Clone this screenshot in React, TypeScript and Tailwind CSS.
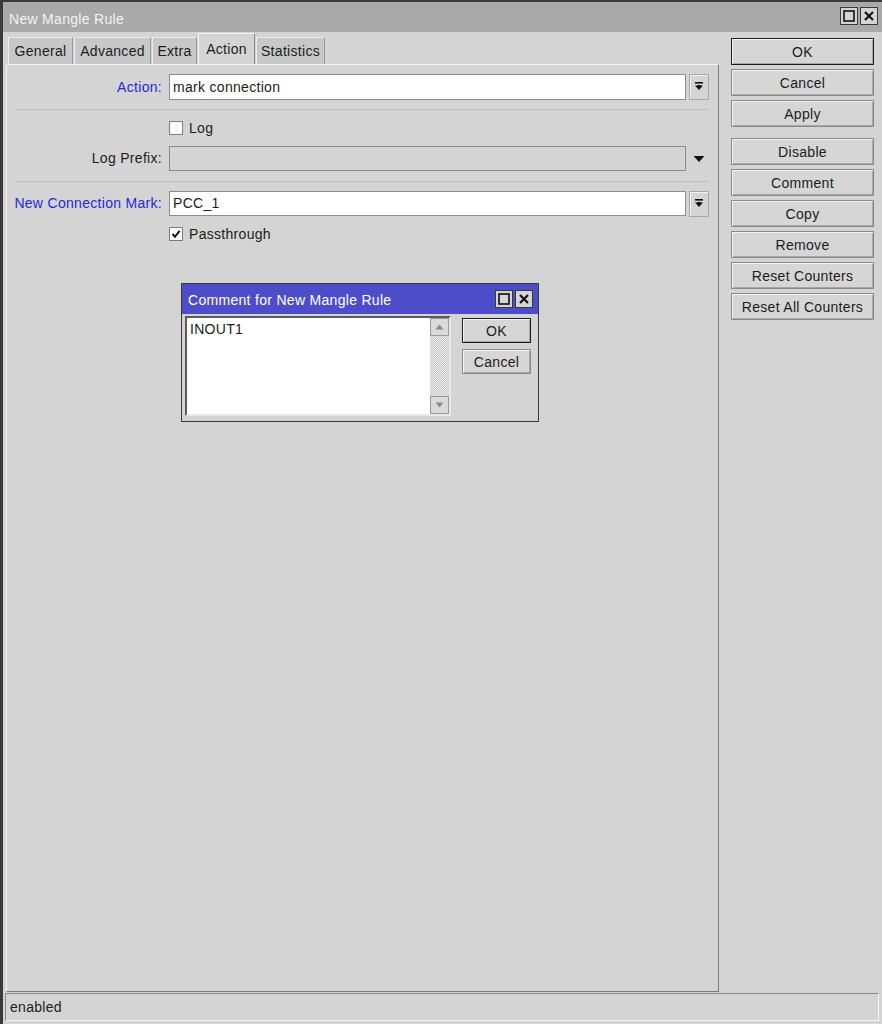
import React from "react";

// ---------------------------------------------------------
// Small pieces
// ---------------------------------------------------------
function WinButtons() {
  return (
    <div className="flex gap-[2px]">
      <div className="flex h-[18px] w-[18px] items-center justify-center border border-[#3a3a3a] bg-[#d4d4d4]">
        <svg width="12" height="12" viewBox="0 0 12 12">
          <rect x="1" y="1" width="10" height="10" fill="none" stroke="#111" strokeWidth="1.6" />
        </svg>
      </div>
      <div className="flex h-[18px] w-[18px] items-center justify-center border border-[#3a3a3a] bg-[#d4d4d4]">
        <svg width="12" height="12" viewBox="0 0 12 12">
          <path d="M2 2 L10 10 M10 2 L2 10" stroke="#111" strokeWidth="2.2" />
        </svg>
      </div>
    </div>
  );
}

function SideButton({ label, isDefault }: { label: string; isDefault?: boolean }) {
  return (
    <button
      className={
        isDefault
          ? "h-[27px] w-full border border-[#1e1e1e] bg-[#d6d6d6] pt-[2px] text-[14px] text-[#1c1c1c] shadow-[inset_1px_1px_0_#f4f4f4,inset_-1px_-1px_0_#a6a6a6]"
          : "h-[27px] w-full border border-[#8a8a8a] bg-[#d6d6d6] pt-[2px] text-[14px] text-[#1c1c1c] shadow-[inset_1px_1px_0_#f4f4f4,inset_-1px_-1px_0_#a6a6a6]"
      }
    >
      {label}
    </button>
  );
}

function DropButton() {
  return (
    <div className="ml-[3px] flex h-[26px] w-[20px] items-center justify-center border border-[#a8a8a8] bg-[#d4d4d4] shadow-[inset_1px_1px_0_#f0f0f0]">
      <svg width="10" height="12" viewBox="0 0 10 12">
        <rect x="1" y="1" width="8" height="1.6" fill="#111" />
        <path d="M1 4.5 H9 L5 9 Z" fill="#111" />
        <rect x="3.5" y="4" width="3" height="3" fill="#111" />
      </svg>
    </div>
  );
}

function Checkbox({ checked }: { checked?: boolean }) {
  return (
    <div className="flex h-[14px] w-[14px] items-center justify-center border border-[#7c7c7c] bg-white">
      {checked && (
        <svg width="10" height="10" viewBox="0 0 10 10">
          <path d="M1.5 5 L4 7.8 L8.6 1.8" fill="none" stroke="#111" strokeWidth="2" />
        </svg>
      )}
    </div>
  );
}

const tabs = [
  { name: "General", w: "w-[65px]" },
  { name: "Advanced", w: "w-[77px]" },
  { name: "Extra", w: "w-[45px]" },
  { name: "Action", w: "w-[57px]", active: true },
  { name: "Statistics", w: "w-[69px]" },
];

// ---------------------------------------------------------
// Page
// ---------------------------------------------------------
export default function App() {
  return (
    <div className="relative flex h-[1024px] w-[882px] flex-col border-l-[3px] border-t-2 border-[#3a3a3a] bg-[#d4d4d4] font-[family-name:'Liberation_Sans',Arial,sans-serif] text-[14px] tracking-[0.3px] text-[#1c1c1c]">
      {/* Title bar */}
      <div className="flex h-[30px] items-center justify-between bg-[#a9a9a9] pl-[6px] pr-[4px]">
        <span className="pt-[5px] text-[14px] text-[#f4f4f4]">New Mangle Rule</span>
        <div className="-mt-[2px]">
          <WinButtons />
        </div>
      </div>

      {/* Main */}
      <div className="flex flex-1">
        {/* Tabs + panel */}
        <div className="ml-[3px] flex w-[713px] flex-col">
          <div className="flex h-[32px] items-end gap-px pl-[2px]">
            {tabs.map((t) =>
              t.active ? (
                <div
                  key={t.name}
                  className={`${t.w} -mb-px flex h-[32px] items-center justify-center border-l border-r border-t border-l-[#f4f4f4] border-r-[#8c8c8c] border-t-[#f4f4f4] bg-[#d4d4d4] pb-[1px]`}
                >
                  {t.name}
                </div>
              ) : (
                <div
                  key={t.name}
                  className={`${t.w} flex h-[27px] items-center justify-center border-l border-r border-t border-l-[#ececec] border-r-[#9a9a9a] border-t-[#ececec] bg-[#c8c8c8] pt-[1px]`}
                >
                  {t.name}
                </div>
              )
            )}
          </div>

          <div className="flex-1 border border-b-[#7c7c7c] border-l-[#f6f6f6] border-r-[#7c7c7c] border-t-[#f6f6f6] bg-[#d4d4d4]">
            {/* Action */}
            <div className="mt-[9px] flex h-[26px] items-center">
              <span className="w-[155px] text-right text-[#2626e0]">Action:</span>
              <div className="ml-[7px] flex h-[26px] w-[517px] items-center border border-[#8c8c8c] bg-white pl-[3px]">
                mark connection
              </div>
              <DropButton />
            </div>

            <div className="ml-[8px] mr-[10px] mt-[9px] border-t border-[#bdbdbd]" />

            {/* Log */}
            <div className="mt-[11px] flex h-[14px] items-center">
              <div className="ml-[162px]">
                <Checkbox />
              </div>
              <span className="ml-[6px]">Log</span>
            </div>

            {/* Log Prefix */}
            <div className="mt-[11px] flex h-[25px] items-center">
              <span className="w-[155px] text-right">Log Prefix:</span>
              <div className="ml-[7px] h-[25px] w-[517px] border border-[#8c8c8c] bg-[#d4d4d4]" />
              <div className="ml-[3px] flex w-[20px] items-center justify-center">
                <svg width="12" height="8" viewBox="0 0 12 8">
                  <path d="M0.5 1 H11.5 L6 7 Z" fill="#111" />
                </svg>
              </div>
            </div>

            <div className="ml-[8px] mr-[10px] mt-[10px] border-t border-[#bdbdbd]" />

            {/* New Connection Mark */}
            <div className="mt-[9px] flex h-[25px] items-center">
              <span className="w-[155px] text-right text-[#2626e0]">New Connection Mark:</span>
              <div className="ml-[7px] flex h-[25px] w-[517px] items-center border border-[#8c8c8c] bg-white pl-[3px]">
                PCC_1
              </div>
              <DropButton />
            </div>

            {/* Passthrough */}
            <div className="mt-[11px] flex h-[14px] items-center">
              <div className="ml-[162px]">
                <Checkbox checked />
              </div>
              <span className="ml-[6px]">Passthrough</span>
            </div>
          </div>
        </div>

        {/* Right buttons */}
        <div className="ml-[12px] flex w-[143px] flex-col pt-[6px]">
          <div className="flex flex-col gap-[4px]">
            <SideButton label="OK" isDefault />
            <SideButton label="Cancel" />
            <SideButton label="Apply" />
          </div>
          <div className="mt-[11px] flex flex-col gap-[4px]">
            <SideButton label="Disable" />
            <SideButton label="Comment" />
            <SideButton label="Copy" />
            <SideButton label="Remove" />
            <SideButton label="Reset Counters" />
            <SideButton label="Reset All Counters" />
          </div>
        </div>
      </div>

      {/* Status bar */}
      <div className="mb-[3px] ml-[2px] mr-[3px] mt-px flex h-[28px] items-center border border-b-[#f6f6f6] border-l-[#8a8a8a] border-r-[#f6f6f6] border-t-[#8a8a8a] pl-[4px]">
        enabled
      </div>

      {/* Comment dialog */}
      <div className="absolute left-[178px] top-[281px] w-[358px] border border-[#3a3a3a] bg-[#d4d4d4]">
        <div className="flex h-[30px] items-center justify-between bg-[#4d4dc9] pl-[6px] pr-[5px]">
          <span className="pt-[2px] text-[14px] text-white">Comment for New Mangle Rule</span>
          <WinButtons />
        </div>
        <div className="flex px-[3px] pb-[5px] pt-[2px]">
          <div className="flex h-[100px] w-[266px] border-2 border-b-[#e8e8e8] border-l-[#5a5a5a] border-r-[#e8e8e8] border-t-[#5a5a5a] bg-white">
            <div className="flex-1 pl-[3px] pt-[1px]">INOUT1</div>
            <div className="flex w-[19px] flex-col bg-[repeating-conic-gradient(#c8c8c8_0%_25%,#ececec_0%_50%)] bg-[length:2px_2px]">
              <div className="flex h-[18px] items-center justify-center border border-[#9a9a9a] bg-[#dadada]">
                <svg width="9" height="6" viewBox="0 0 9 6">
                  <path d="M0.5 5.5 H8.5 L4.5 0.5 Z" fill="#8a8a8a" />
                </svg>
              </div>
              <div className="flex-1" />
              <div className="flex h-[18px] items-center justify-center border border-[#9a9a9a] bg-[#dadada]">
                <svg width="9" height="6" viewBox="0 0 9 6">
                  <path d="M0.5 0.5 H8.5 L4.5 5.5 Z" fill="#8a8a8a" />
                </svg>
              </div>
            </div>
          </div>
          <div className="ml-[11px] flex flex-col gap-[6px] pt-[2px]">
            <button className="h-[25px] w-[69px] border border-[#1e1e1e] bg-[#d6d6d6] pt-[2px] text-[14px] shadow-[inset_1px_1px_0_#f4f4f4,inset_-1px_-1px_0_#a6a6a6]">
              OK
            </button>
            <button className="h-[25px] w-[69px] border border-[#8a8a8a] bg-[#d6d6d6] pt-[2px] text-[14px] shadow-[inset_1px_1px_0_#f4f4f4,inset_-1px_-1px_0_#a6a6a6]">
              Cancel
            </button>
          </div>
        </div>
      </div>
    </div>
  );
}
